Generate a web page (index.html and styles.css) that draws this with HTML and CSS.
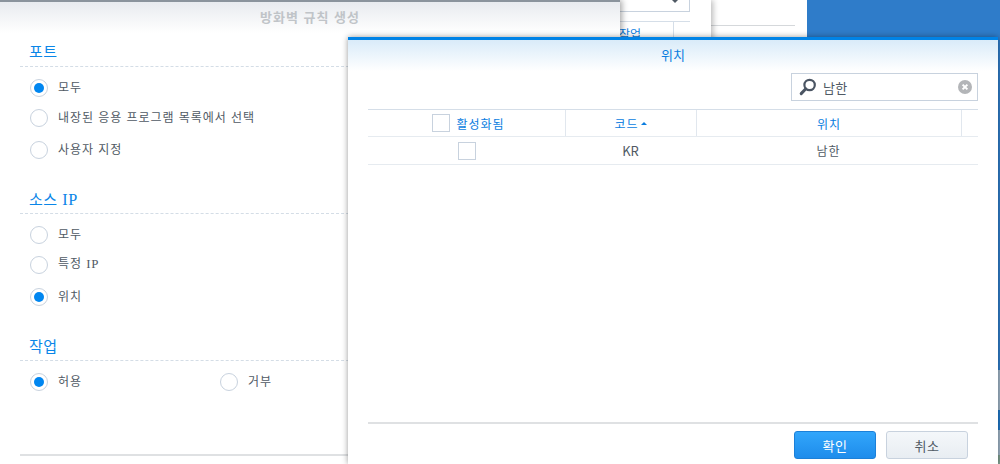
FILE: index.html
```html
<!DOCTYPE html>
<html lang="ko">
<head>
<meta charset="utf-8">
<title>위치</title>
<link rel="stylesheet" href="styles.css">
</head>
<body>
<div class="desktop">
  <div class="strip"></div>
  <div class="win win-back"><div class="back-line"></div></div>
  <div class="win win-mid">
    <div class="mid-select"><span class="mid-caret"></span></div>
    <div class="mid-row"><span class="mid-cell">작업</span></div>
  </div>

  <section class="win win-rule">
    <header class="rule-title">방화벽 규칙 생성</header>
    <div class="rule-body">
      <h2 class="sec-head">포트</h2>
      <div class="radios">
        <label class="radio on"><i></i><span>모두</span></label>
        <label class="radio"><i></i><span>내장된 응용 프로그램 목록에서 선택</span></label>
        <label class="radio"><i></i><span>사용자 지정</span></label>
      </div>
      <h2 class="sec-head sec-next">소스 <span class="ip">IP</span></h2>
      <div class="radios">
        <label class="radio"><i></i><span>모두</span></label>
        <label class="radio"><i></i><span>특정 <span class="ip">IP</span></span></label>
        <label class="radio on"><i></i><span>위치</span></label>
      </div>
      <h2 class="sec-head sec-next">작업</h2>
      <div class="radios radio-row">
        <label class="radio on"><i></i><span>허용</span></label>
        <label class="radio"><i></i><span>거부</span></label>
      </div>
    </div>
    <div class="rule-foot"></div>
  </section>

  <section class="win dialog">
    <header class="dlg-title">위치</header>
    <div class="dlg-tools">
      <div class="search">
        <svg class="search-ico" width="18" height="18" viewBox="0 0 18 18"><circle cx="10.6" cy="7" r="5.2" fill="none" stroke="#4b5563" stroke-width="2.2"/><path d="M6.8 10.8 2.2 15.6" stroke="#4b5563" stroke-width="3" stroke-linecap="round"/></svg>
        <span class="search-text">남한</span>
        <svg class="search-x" width="14" height="14" viewBox="0 0 14 14"><circle cx="7" cy="7" r="7" fill="#b3b5b8"/><path d="M4.6 4.6l4.8 4.8M9.4 4.6 4.6 9.4" stroke="#fff" stroke-width="2"/></svg>
      </div>
    </div>
    <div class="grid">
      <div class="grid-row grid-head">
        <div class="cell c-check"><span class="box"></span><span>활성화됨</span></div>
        <div class="cell c-code"><span>코드</span><span class="sort"></span></div>
        <div class="cell c-loc">위치</div>
        <div class="cell c-end"></div>
      </div>
      <div class="grid-row grid-item">
        <div class="cell c-check"><span class="box"></span></div>
        <div class="cell c-code code-val">KR</div>
        <div class="cell c-loc">남한</div>
        <div class="cell c-end"></div>
      </div>
    </div>
    <footer class="dlg-foot">
      <button class="btn btn-primary">확인</button>
      <button class="btn">취소</button>
    </footer>
  </section>
</div>
</body>
</html>
```
FILE: styles.css
```css
* { box-sizing: border-box; }
html, body { margin: 0; padding: 0; }
body {
  font-family: "Noto Sans CJK KR", "Noto Sans", sans-serif;
  font-size: 12px;
  color: #505a64;
}
.desktop {
  position: relative;
  width: 1000px;
  height: 464px;
  overflow: hidden;
  background: #2f7cc9;
}
.strip {
  position: absolute;
  right: 0;
  top: 370px;
  width: 2px;
  height: 94px;
  background: linear-gradient(#9fb4c6 0 40px, #1f78c8 40px 60px, #9fb4c6 60px 85px, #7f9f8f 85px);
}
.win { position: absolute; background: #fff; }

.win-back {
  left: 600px; top: 0; width: 207px; height: 60px;
}
.back-line {
  position: absolute;
  left: 110px; top: 25px;
  width: 85px; height: 1px;
  background: #d5d8db;
}
.win-mid {
  left: 500px; top: 0; width: 211px; height: 60px;
  box-shadow: 2px 0 6px rgba(0,0,0,.28);
}
.mid-select {
  position: absolute;
  left: 100px; top: -10px;
  width: 90px; height: 22px;
  border: 1px solid #c8d2de;
}
.mid-caret {
  position: absolute;
  right: 11px; bottom: 8px;
  border: 3px solid transparent;
  border-top-color: #505a64;
  border-bottom-width: 0;
}
.mid-row {
  position: absolute;
  left: 100px; top: 21px;
  width: 90px; height: 30px;
  border-top: 1px solid #d5dee8;
}
.mid-cell {
  position: absolute;
  left: 19px; top: 3px;
  color: #0a7ddf;
  font-size: 12px;
  line-height: 18px;
}
.mid-cell::after {
  content: "";
  position: absolute;
  left: 54px; top: -3px;
  width: 1px; height: 30px;
  background: #d5dee8;
}

.win-rule {
  left: 0; top: 0; width: 620px; height: 464px;
  border-top: 2px solid #8b949d;
  box-shadow: 2px 0 6px rgba(0,0,0,.35);
}
.rule-title {
  height: 31px;
  padding-top: 6px;
  padding-left: 260px;
  font-size: 13px;
  line-height: 18px;
  font-weight: 700;
  color: #c0c4c8;
  letter-spacing: 1px;
  background: linear-gradient(#e8ebef, #fff);
}
.rule-body { padding: 0 0 0 20px; }
.sec-head {
  margin: 0;
  height: 34px;
  padding: 8px 0 0 9px;
  font-size: 15px;
  line-height: 20px;
  font-weight: 400;
  color: #0a86e8;
  letter-spacing: .5px;
  border-bottom: 1px dashed #d4dde6;
}
.sec-next { height: 49px; padding-top: 24px; }
.ip { font-family: "Liberation Serif", serif; font-size: 1.08em; letter-spacing: .6px; }
.radios { display: flex; flex-direction: column; padding-top: 6px; }
.radio {
  display: flex;
  align-items: center;
  gap: 10px;
  height: 30px;
  padding-left: 10px;
  font-size: 12px;
  letter-spacing: .95px;
  color: #505a64;
}
.radio span { position: relative; top: -2px; }
.radio span span { top: 0; }
.radios .radio:nth-child(3) { margin-top: 2px; }
.radio i {
  flex: none;
  position: relative;
  width: 18px; height: 18px;
  border-radius: 50%;
  border: 1px solid #c8d2de;
  background: #fff;
}
.radio.on i::after {
  content: "";
  position: absolute;
  left: 3px; top: 3px;
  width: 10px; height: 10px;
  border-radius: 50%;
  background: #0086f0;
}
.radio-row { flex-direction: row; }
.radio-row .radio { width: 190px; }
.rule-foot {
  position: absolute;
  left: 20px; top: 452px;
  width: 600px; height: 2px;
  background: #dfe1e3;
}

.dialog {
  left: 348px; top: 37px; width: 650px; height: 427px;
  border-top: 3px solid #0083e6;
  box-shadow: 0 0 6px rgba(0,0,0,.4);
  display: flex;
  flex-direction: column;
}
.dlg-title {
  flex: none;
  height: 31px;
  padding-top: 6px;
  text-align: center;
  font-size: 13px;
  line-height: 18px;
  color: #0a7ddf;
  background: linear-gradient(#d9ebf9, #fff);
}
.dlg-tools {
  flex: none;
  height: 38px;
  display: flex;
  justify-content: flex-end;
  padding: 2px 20px 0 0;
}
.search {
  width: 187px; height: 28px;
  border: 1px solid #c8d2de;
  display: flex;
  align-items: center;
  padding: 0 5px 0 7px;
  background: #fff;
}
.search-ico { flex: none; }
.search-text { flex: 1; margin-left: 6px; font-size: 13px; letter-spacing: .2px; }
.search-x { flex: none; }
.grid { flex: 1; margin: 0 20px; min-height: 0; }
.grid-row { display: flex; }
.grid-head {
  height: 28px;
  border-top: 1px solid #d5dee8;
  border-bottom: 1px solid #e6ebf0;
  color: #0a7ddf;
}
.grid-item { height: 28px; border-bottom: 1px solid #e6ebf0; }
.cell {
  display: flex;
  align-items: center;
  justify-content: center;
  font-size: 12px;
  letter-spacing: .9px;
}
.grid-head .cell + .cell { border-left: 1px solid #e1e7ee; }
.c-check { width: 197px; gap: 7px; }
.grid-head .c-check { padding-left: 3px; }
.c-code { width: 131px; }
.c-loc { width: 265px; }
.c-end { flex: 1; }
.code-val { font-size: 13px; letter-spacing: 0; }
.box {
  width: 18px; height: 18px;
  border: 1px solid #c8d2de;
  background: #fff;
}
.sort {
  margin-left: 3px;
  border: 3.5px solid transparent;
  border-bottom-color: #0a7ddf;
  border-top-width: 0;
}
.dlg-foot {
  flex: none;
  margin: 0 20px;
  height: 42px;
  border-top: 2px solid #dfe1e3;
  display: flex;
  justify-content: flex-end;
  gap: 10px;
  padding: 7px 10px 0 0;
}
.btn {
  width: 82px; height: 28px;
  border: 1px solid #c8d2de;
  border-radius: 3px;
  font: inherit;
  font-size: 13px;
  letter-spacing: .5px;
  color: #505a64;
  background: linear-gradient(#f4f7fa, #e8edf2);
  padding: 0;
}
.btn-primary {
  color: #fff;
  border-color: #1c80d8;
  background: linear-gradient(#32a6fb, #1e8ceb);
}
```
